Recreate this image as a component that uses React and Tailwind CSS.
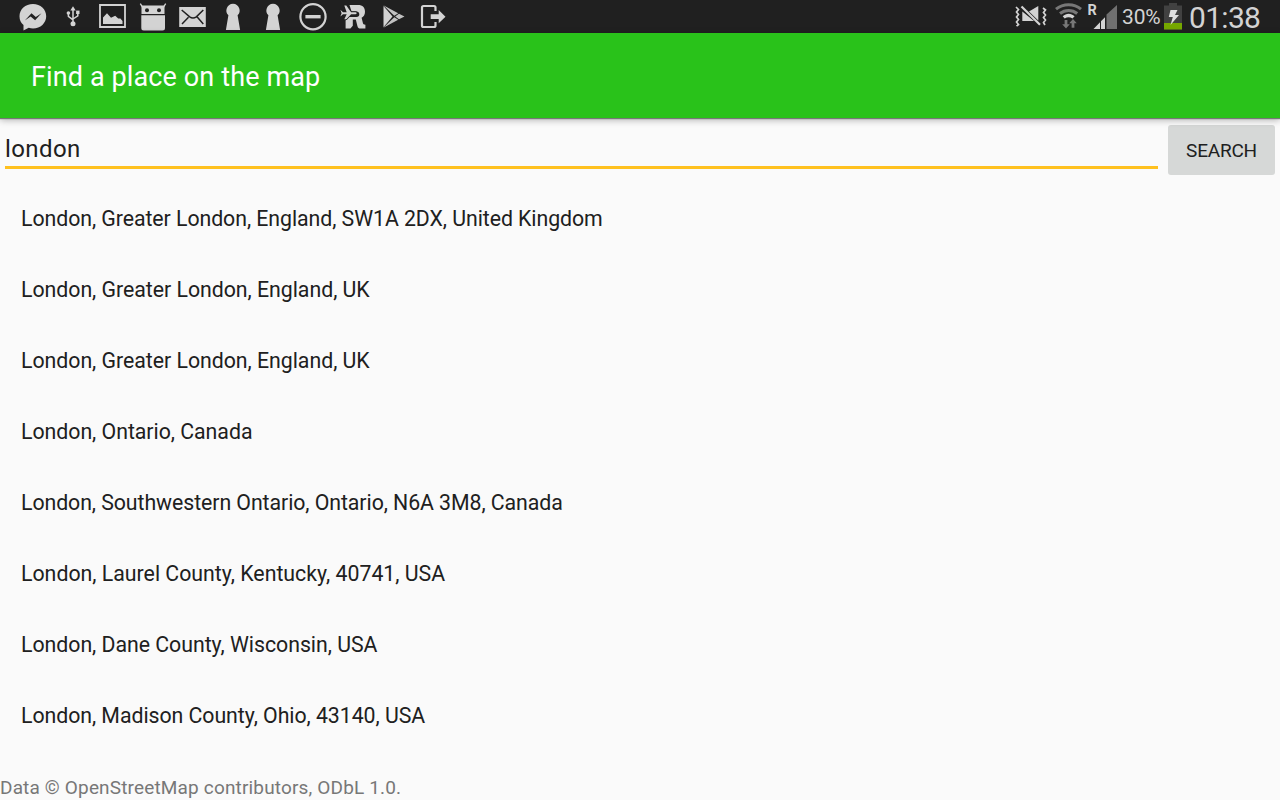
import React from 'react';

const places = [
  ['London, Greater London, England, SW1A 2DX, United Kingdom', 'tracking-[-0.06px]'],
  ['London, Greater London, England, UK', 'tracking-[-0.03px]'],
  ['London, Greater London, England, UK', 'tracking-[-0.03px]'],
  ['London, Ontario, Canada', 'tracking-[-0.03px]'],
  ['London, Southwestern Ontario, Ontario, N6A 3M8, Canada', 'tracking-[-0.07px]'],
  ['London, Laurel County, Kentucky, 40741, USA', 'tracking-normal'],
  ['London, Dane County, Wisconsin, USA', 'tracking-[-0.03px]'],
  ['London, Madison County, Ohio, 43140, USA', 'tracking-[-0.05px]'],
];

function Icon({ children }) {
  return (
    <svg viewBox="0 0 40 33" className="h-[33px] w-10 shrink-0" fill="#d3d3d3">
      {children}
    </svg>
  );
}

function Keyhole() {
  return (
    <Icon>
      <path d="M20 3.7a6.8 6.8 0 0 1 4.6 11.6L27.1 30H12.9l2.5-14.7A6.8 6.8 0 0 1 20 3.7Z" />
    </Icon>
  );
}

function Notifications() {
  return (
    <div className="flex">
      <Icon>
        <path d="M20 4C12.300 4 6.500 9.300 6.500 16.200c0 3.800 1.400 6.500 4 8.800v5.500l5.200-2.700c1.400.4 2.800.6 4.300.6 7.500 0 13.200-5.400 13.200-12.200S27.500 4 20 4Z" />
        <path d="m11.800 20.500 6.700-7.200 4.300 3.600 5.700-3.600-6.400 7-4.500-3.700Z" fill="#202020" />
      </Icon>
      <Icon>
        <path d="m20 6.300 2.700 4.200h-5.400Z" />
        <circle cx="20" cy="23.700" r="2.500" />
        <circle cx="15.400" cy="13" r="1.800" />
        <path d="M23.100 10.600h3.400v3.400h-3.400Z" />
        <path d="M20 9v14M15.400 13v3.300L20 19.800M24.800 13v2.800L20 19" fill="none" stroke="#d3d3d3" strokeWidth="1.500" />
      </Icon>
      <Icon>
        <path d="M7 5h25v22H7Z" fill="none" stroke="#d3d3d3" strokeWidth="1.800" />
        <path d="M10 24v-6.500l4-4.300 4 4.600 4.200-2 3 2.700h2.200L29.500 21v3Z" />
      </Icon>
      <Icon>
        <path d="M8.500 5.500H31.500V14H8.500ZM8.300 15.300h23.700V28a2.500 2.500 0 0 1-2.500 2.500H10.800A2.500 2.500 0 0 1 8.300 28Z" />
        <path d="m7.300 3.600 2.200 3.600M32.700 3.600l-2.200 3.600" stroke="#d3d3d3" strokeWidth="1.300" />
        <circle cx="14" cy="10.300" r="2" fill="#202020" />
        <circle cx="26" cy="10.300" r="2" fill="#202020" />
      </Icon>
      <Icon>
        <path d="M6.200 7h26.600v20H6.200Z" />
        <path d="m8.700 10 8 6.800c2.200 1.600 4.400 1.600 6.600 0l7-6.800M9 24l6.500-6.700M30.300 24 24 16.800" fill="none" stroke="#202020" strokeWidth="1.500" />
      </Icon>
      <Keyhole />
      <Keyhole />
      <Icon>
        <circle cx="20" cy="16.700" r="12.600" fill="none" stroke="#d3d3d3" strokeWidth="2.200" />
        <path d="M12.400 15h15.200v3.400H12.400Z" />
      </Icon>
      <Icon>
        <path d="M16.500 5h8.500c4.700 0 7 2.700 7 6.700 0 3-1.300 5-3.400 6.100l1.300 5.300c.3 1.200.8 1.600 2.500 1.600v3.800h-4.800c-1.900 0-2.700-.8-3.200-2.600L22.800 19.500h-3v6.200l-2.400 2.800h-4.800v-8l2.900-3.500h8c1.800 0 2.800-1 2.800-2.700s-1-2.800-2.800-2.800h-5Z" />
        <path d="m7.400 9.700 2.600 2.500h3.700L11.300 5.500h2l4.800 6.700h4.400c1.500.2 1.500 1.800 0 2h-4.400l-4.800 5h-2l2.400-5H10l-2.600 2.300 1.200-3.300Z" stroke="#202020" strokeWidth="1.800" paintOrder="stroke" />
      </Icon>
      <Icon>
        <path d="m10.500 6 9 10.500-9 10.700Z" />
        <path d="m10.300 5.300 14.900 8-3.900 2.500ZM10.300 27.700l14.900-8-3.900-2.500ZM26 13.800l5.500 2.800-5.500 2.700-3.800-2.700Z" opacity=".9" />
      </Icon>
      <Icon>
        <path d="M22.500 11V7.500a1.500 1.500 0 0 0-1.500-1.500H10.500A1.500 1.500 0 0 0 9 7.500v18A1.500 1.500 0 0 0 10.500 27H21a1.500 1.500 0 0 0 1.500-1.500V22" fill="none" stroke="#d3d3d3" strokeWidth="2.200" />
        <path d="M17.700 14.300h8V10l6.800 6.800-6.800 6.500V19h-8Z" />
      </Icon>
    </div>
  );
}

function SystemStatus() {
  return (
    <div className="flex items-center pr-5 text-[#d3d3d3]">
      <svg viewBox="1012 0 109 33" className="h-[33px] w-[109px]" fill="#d3d3d3">
        <path d="m1016 7 2.500 2.500-2 2.500 2 2.500-2 2.500 2 2.500-2 2.500 2 2.500-2 1.500M1043 8l2.500 2-2 2.500 2 2.500-2 2.500 2 2.500-2 2.500 1.500 2.500" fill="none" stroke="#d3d3d3" strokeWidth="1.700" />
        <path d="M1022.300 11.500 1034 21h-11.700ZM1029 11.500l9.300-5.500v14.500Z" />
        <path d="m1021.500 6.500 18.500 18.300" stroke="#d3d3d3" strokeWidth="2.200" />
        <g fill="none" stroke="#777" strokeWidth="3">
          <path d="M1056 9.200c7.200-6 18-6 25 0" />
          <path d="M1060 13.500c5-4.100 12.300-4.100 17.200 0" />
        </g>
        <path d="M1062.700 16.300c3.600-3.400 8.300-3.400 11.900 0l-2.100 2.300c-2.400-1.700-5.400-1.700-7.800 0Z" />
        <path d="m1066 28.500-3.800-4.200h2.400V20h2.800v4.300h2.400ZM1073 19l3.800 4.200h-2.400v4.600h-2.800v-4.600h-2.400Z" fill="#777" stroke="#202020" strokeWidth=".7" paintOrder="stroke" />
        <text x="1087.500" y="15" fontFamily="Roboto" fontWeight="700" fontSize="14.500" textLength="9.500">R</text>
        <path d="M1106.500 14.500 1117 5v24h-10.500Z" fill="#707070" />
        <path d="m1093.500 29 6.500-6.700V29ZM1101 21.300l4-4V29h-4Z" />
      </svg>
      <span className="ml-px w-[42px] pt-[2px] text-[21px] leading-[33px] tracking-[-0.15px]">30%</span>
      <svg viewBox="0 0 18 33" className="h-[33px] w-[18px]">
        <path d="M5 3h8v2.500h5V29.500H0v-24h5Z" fill="#414141" />
        <path d="M0 23h18v6.500H0Z" fill="#76a800" />
        <path d="M6.500 10h7L11 15h4L6.500 25l2.300-8H4.800Z" fill="#dedede" />
      </svg>
      <time className="ml-[7px] w-[71px] whitespace-nowrap pt-px text-[30px] leading-[33px] tracking-[-0.7px]">01:38</time>
    </div>
  );
}

export default function App() {
  return (
    <main className="flex h-screen w-full flex-col overflow-hidden bg-[#fafafa] font-[Roboto,sans-serif] text-[#202020]">
      <div className="flex h-[33px] shrink-0 justify-between bg-[#202020] pl-[13px]">
        <Notifications />
        <SystemStatus />
      </div>
      <header className="z-10 flex h-[85px] shrink-0 items-center bg-[#29c21a] pl-[31px] pt-[2px] text-white shadow-[0_1px_1px_#777,0_2px_7px_rgba(0,0,0,0.3)]">
        <h1 className="text-[27px] leading-8 tracking-[0.12px]">Find a place on the map</h1>
      </header>
      <form className="flex h-[65px] shrink-0 items-start pl-[5px] pr-[5px] pt-[7px]" onSubmit={(e) => e.preventDefault()}>
        <input aria-label="Place" defaultValue="london" className="h-[44px] w-[1153px] border-b-[3px] border-[#ffc11f] pt-[7px] text-[24px] tracking-[0.4px] outline-none" />
        <button className="ml-[10px] h-[50px] w-[107px] rounded-[3px] bg-[#d6d8d7] pt-[2px] text-[19px] tracking-[-0.2px]">SEARCH</button>
      </form>
      <ul className="flex flex-col pl-[21px]">
        {places.map(([place, tracking], i) => (
          <li key={i} className={`flex h-[71px] items-center text-[21.3px] leading-7 ${tracking}`}>{place}</li>
        ))}
      </ul>
      <footer className="pt-[25px] text-[19px] leading-6 tracking-[0.16px] text-[#777]">Data © OpenStreetMap contributors, ODbL 1.0.</footer>
    </main>
  );
}
